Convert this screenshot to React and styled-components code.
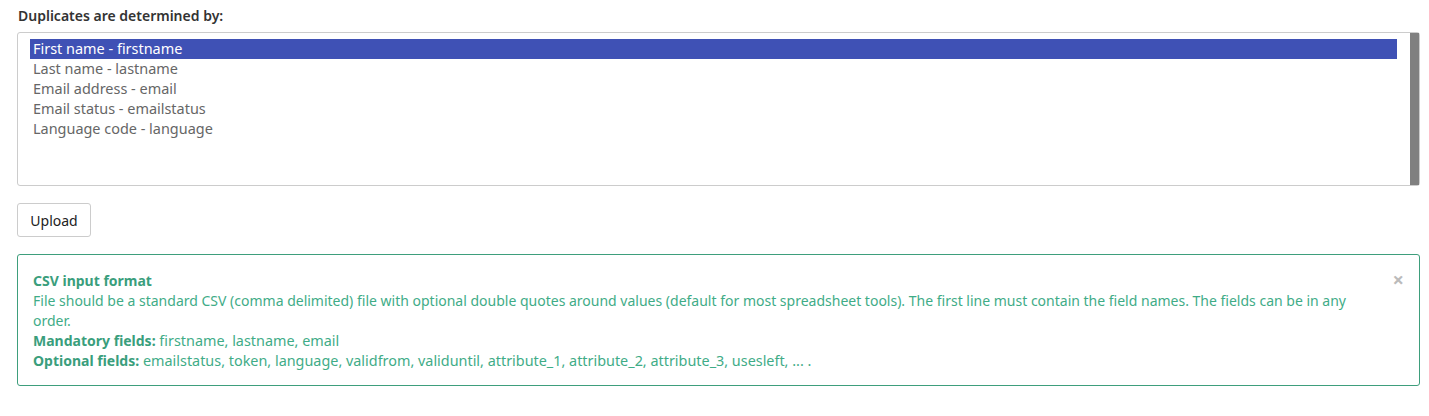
import React from 'react';
import styled, { createGlobalStyle } from 'styled-components';

const GlobalStyle = createGlobalStyle`
  body {
    margin: 0;
    background: #fff;
    font-family: 'Noto Sans', 'Open Sans', sans-serif;
    font-size: 14px;
    line-height: 20px;
    color: #333;
  }
`;

const fields = [
  'First name - firstname',
  'Last name - lastname',
  'Email address - email',
  'Email status - emailstatus',
  'Language code - language',
];

const App = () => {
  return (
    <Page>
      <GlobalStyle />
      <Label>Duplicates are determined by:</Label>
      <Listbox>
        <Options>
          {fields.map((f, i) => (
            <Option key={f} selected={i === 0}>
              {f}
            </Option>
          ))}
        </Options>
        <Scrollbar />
      </Listbox>
      <UploadButton>Upload</UploadButton>
      <Alert>
        <CloseButton>×</CloseButton>
        <Title>CSV input format</Title>
        <Description>
          File should be a standard CSV (comma delimited) file with optional double quotes around values
          (default for most spreadsheet tools). The first line must contain the field names. The fields can
          be in any order.
        </Description>
        <FieldLine>
          <strong>Mandatory fields:</strong> firstname, lastname, email
        </FieldLine>
        <FieldLine>
          <strong>Optional fields:</strong> emailstatus, token, language, validfrom, validuntil, attribute_1,
          attribute_2, attribute_3, usesleft, ... .
        </FieldLine>
      </Alert>
    </Page>
  );
};

export default App;

const Page = styled.div`
  padding: 6px 9px 20px 17px;
  display: flex;
  flex-direction: column;
  align-items: flex-start;
`;

const Label = styled.div`
  font-weight: 600;
  color: #333;
  margin-bottom: 6px;
  padding-left: 1px;
`;

const Listbox = styled.div`
  align-self: stretch;
  display: flex;
  height: 152px;
  border: 1px solid #ccc;
  border-radius: 3px;
`;

const Options = styled.div`
  flex: 1;
  padding: 6px 13px 6px 12px;
`;

const Option = styled.div`
  padding-left: 3px;
  height: 20px;
  font-size: 14.45px;
  color: ${(p) => (p.selected ? '#fff' : '#666')};
  background: ${(p) => (p.selected ? '#3f51b5' : 'transparent')};
`;

const Scrollbar = styled.div`
  width: 9px;
  background: #808080;
`;

const UploadButton = styled.button`
  margin-top: 17px;
  width: 74px;
  height: 34px;
  font-family: inherit;
  font-size: 14px;
  color: #222;
  background: #fff;
  border: 1px solid #ccc;
  border-radius: 3px;
  padding: 0;
  cursor: pointer;
`;

const Alert = styled.div`
  position: relative;
  align-self: stretch;
  margin-top: 17px;
  padding: 16px 36px 14px 15px;
  border: 1px solid #3e9e7c;
  border-radius: 3px;
  color: #3fac87;

  strong {
    font-weight: bold;
    font-size: 14px;
    color: #3a9e7c;
  }
`;

const Title = styled.div`
  font-weight: bold;
  color: #3a9e7c;
`;

const Description = styled.div``;

const FieldLine = styled.div`
  font-size: 14.4px;
`;

const CloseButton = styled.span`
  position: absolute;
  top: 15px;
  right: 15px;
  font-size: 20px;
  font-weight: bold;
  color: #bbb;
  line-height: 20px;
`;
